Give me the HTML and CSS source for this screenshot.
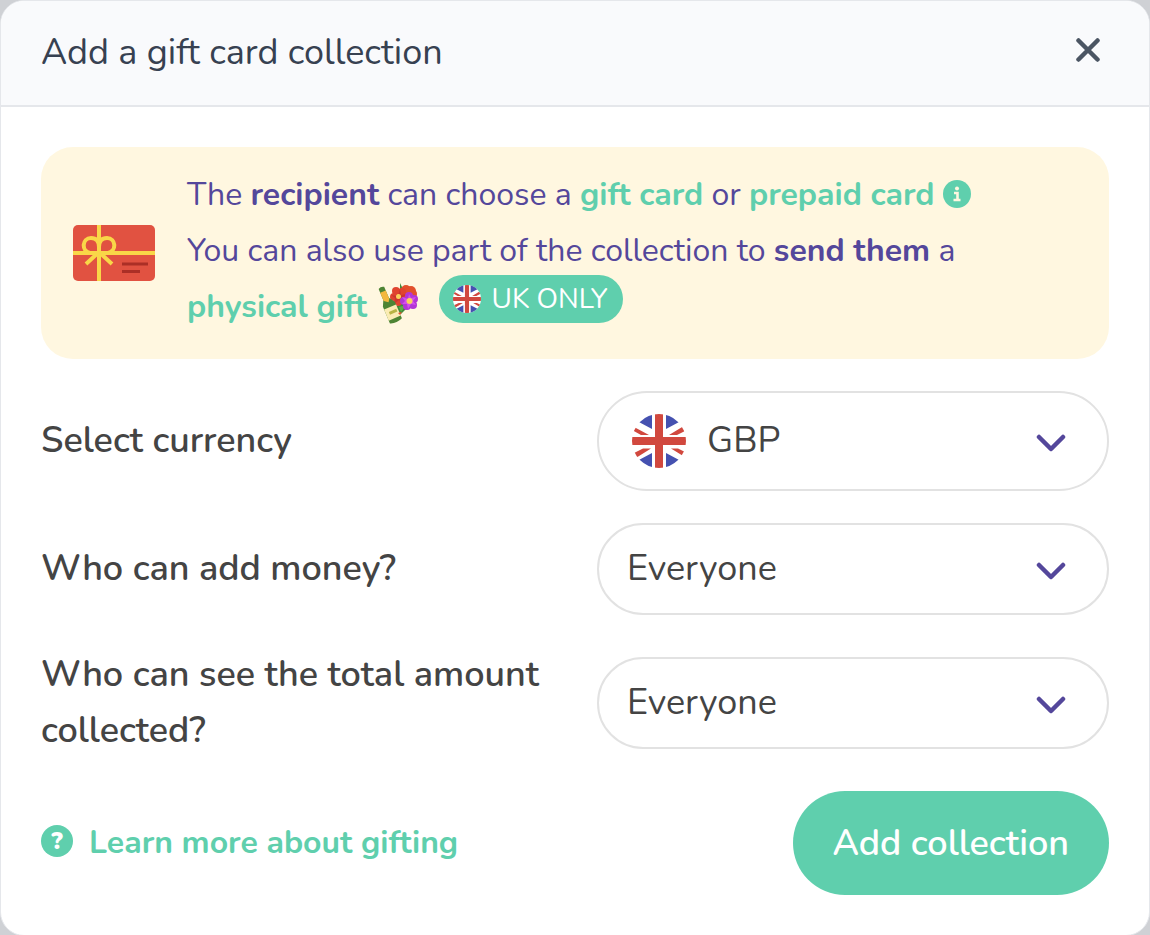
FILE: index.html
```html
<!DOCTYPE html>
<html lang="en">
<head>
    <meta charset="UTF-8">
    <meta name="viewport" content="width=device-width, initial-scale=1.0">
    <title>Add a gift card collection</title>
    <link rel="stylesheet" href="styles.css">
</head>
<body>
    <svg width="0" height="0" class="defs" aria-hidden="true">
        <clipPath id="flagClip"><circle cx="27" cy="27" r="27"/></clipPath>
        <symbol id="flag" viewBox="0 0 54 54">
            <g clip-path="url(#flagClip)">
                <path fill="#fff" d="M0 0h54v54H0z"/>
                <path fill="#4551b0" d="M20 0v15L5 7 12 0zM34 0v15L49 7 42 0zM20 54V39L5 47l7 7zM34 54V39L49 47l-7 7z"/>
                <path fill="#d1483e" d="M3 13.500l14 7.500H9L0 16zM51 12.500L37 21h8l9-4.500zM3 44.500L19 34.500H11L0 40zM52 42.500L39 34.500h7l8 4z"/>
                <path fill="#d1483e" d="M23 0h8v23h23v8H31v23h-8V31H0v-8h23z"/>
            </g>
        </symbol>
        <symbol id="chevron" viewBox="0 0 30 18">
            <path fill="none" stroke="#54479b" stroke-width="4.500" stroke-linecap="round" stroke-linejoin="round" d="M3 3l12 12L27 3"/>
        </symbol>
    </svg>

    <div class="modal" role="dialog" aria-labelledby="title">
        <div class="header">
            <h1 id="title">Add a gift card collection</h1>
            <button type="button" class="close" aria-label="Close">
                <svg width="24" height="24" viewBox="0 0 24 24"><path fill="none" stroke="#4b5563" stroke-width="4.500" stroke-linecap="round" d="M2.500 2.500l19 19M21.500 2.500l-19 19"/></svg>
            </button>
        </div>

        <form class="content">
            <div class="notice">
                <svg class="gift-card" width="82" height="56" viewBox="0 0 82 56">
                    <rect width="82" height="56" rx="5" fill="#e15241"/>
                    <path stroke="#f9d748" stroke-width="4" fill="none" d="M26 0v56M0 28h82"/>
                    <path stroke="#f9d748" stroke-width="4" fill="none" d="M26 28H17C8 26 9 13 18 13q8 0 8 9v6h9C44 26 43 13 34 13q-8 0-8 9M26 27L13 39M26 27l13 12"/>
                    <path stroke="#ab2f26" stroke-width="3" d="M49 39h26M49 46.500h18"/>
                </svg>
                <div class="notice-text">
                    <p>The <b>recipient</b> can choose a <a href="#">gift card</a> or <a href="#">prepaid card</a>
                        <svg class="info" width="28" height="28" viewBox="0 0 28 28"><circle cx="14" cy="14" r="14" fill="#5fcfad"/><circle cx="14" cy="8.500" r="2" fill="#fff7e0"/><path fill="none" stroke="#fff7e0" stroke-width="2.600" d="M11 13h3.500v7M10.500 20h7"/></svg>
                    </p>
                    <p>You can also use part of the collection to <b>send them</b> a <a href="#">physical gift</a>
                        <svg class="bottle" width="42" height="42" viewBox="0 0 42 42">
                            <path fill="#3f8a3c" d="M23 0l3 6 4 3-7 3zM19 24l6-6 9 4-6 5-4 4-5-1z"/>
                            <path fill="#5fae45" d="M22 24l7-2-5 7z"/>
                            <g fill="#e2502c"><circle cx="29" cy="7" r="5"/><circle cx="34" cy="8" r="5"/><circle cx="36" cy="11" r="4"/></g>
                            <g fill="#e0442f"><circle cx="19" cy="8" r="4"/><circle cx="25" cy="9" r="4"/><circle cx="26" cy="15" r="4"/><circle cx="21" cy="19" r="4"/><circle cx="17" cy="14" r="4"/></g>
                            <path fill="#c9372f" d="M21 13l2-7 1 6 6-1-5 4 2 6-5-4-5 4 1-6-4-3 6 1z"/>
                            <circle cx="21.500" cy="13.500" r="2.500" fill="#fbd25a"/>
                            <g fill="#b236d6"><circle cx="32" cy="13" r="4"/><circle cx="37" cy="16" r="4"/><circle cx="36" cy="22" r="4"/><circle cx="30" cy="23" r="4"/><circle cx="27" cy="18" r="4"/></g>
                            <path fill="#d34fec" d="M31 16l1-5 2 4 5-1-3 4 3 4-5-1-3 5-1-5-5 0 3-3-3-4z"/>
                            <circle cx="32.500" cy="18" r="3" fill="#fbd25a"/>
                            <g transform="translate(4 4) rotate(-23)">
                                <path fill="#4d8434" d="M-3 1q3-2 6 0v12l4 6v18q-7 3-13 0V19l3-6z"/>
                                <path fill="#f3b83f" d="M-3 5h6v9l-2 3-4-3z"/>
                                <path fill="#fbecb4" d="M-6 22h13v12h-13z"/>
                                <path fill="#b8b445" d="M-2.500 26h8v3h-8z"/>
                            </g>
                            <path fill="#e9522f" d="M21 30l4-1-2 3z"/>
                        </svg>
                        <span class="badge"><svg width="28" height="28"><use href="#flag"/></svg>UK ONLY</span>
                    </p>
                </div>
            </div>

            <div class="row">
                <label for="currency">Select currency</label>
                <div class="select select-currency">
                    <svg class="flag" width="54" height="54"><use href="#flag"/></svg>
                    <select id="currency"><option>GBP</option></select>
                    <svg class="chevron" width="30" height="18"><use href="#chevron"/></svg>
                </div>
            </div>

            <div class="row">
                <label for="contributors">Who can add money?</label>
                <div class="select">
                    <select id="contributors"><option>Everyone</option></select>
                    <svg class="chevron" width="30" height="18"><use href="#chevron"/></svg>
                </div>
            </div>

            <div class="row">
                <label for="viewers">Who can see the total amount collected?</label>
                <div class="select">
                    <select id="viewers"><option>Everyone</option></select>
                    <svg class="chevron" width="30" height="18"><use href="#chevron"/></svg>
                </div>
            </div>

            <div class="footer">
                <a href="#" class="learn-more"><span class="help">?</span>Learn more about gifting</a>
                <button type="button" class="add">Add collection</button>
            </div>
        </form>
    </div>
</body>
</html>
```
FILE: styles.css
```css
* {
    box-sizing: border-box;
}

body {
    margin: 0;
    background: #cfd1d5;
    font-family: Nunito, Lato, sans-serif;
    font-size: 36px;
    line-height: 56px;
    color: #444;
}

.defs {
    position: absolute;
}

.modal {
    background: #fff;
    border: 1px solid #e5e7eb;
    border-radius: 24px;
    overflow: hidden;
}

.header {
    display: flex;
    justify-content: space-between;
    align-items: center;
    padding: 24px 40px;
    background: #f9fafc;
    border-bottom: 2px solid #e5e7eb;
}

.header h1 {
    margin: 0;
    font-size: 36px;
    font-weight: 400;
    color: #374151;
}

button {
    border: none;
    font-family: inherit;
    cursor: pointer;
}

.close {
    display: flex;
    padding: 6px 9px 12px;
    background: none;
}

.content {
    display: flex;
    flex-direction: column;
    gap: 32px;
    padding: 40px;
}

.notice {
    display: flex;
    align-items: center;
    gap: 32px;
    padding: 20px 32px 24px;
    background: #fff7e0;
    border-radius: 32px;
    font-size: 32px;
    color: #54479b;
}

.gift-card {
    flex: none;
    margin-top: 4px;
}

.notice p {
    margin: 0;
}

a {
    color: #5fcfad;
    font-weight: 700;
    text-decoration: none;
}

.info {
    vertical-align: -3px;
}

.bottle {
    margin: 0 11px 0 2px;
    vertical-align: -8px;
}

.badge {
    display: inline-flex;
    align-items: center;
    gap: 11px;
    height: 48px;
    margin: -8px 0;
    padding: 0 16px 0 14px;
    border-radius: 24px;
    background: #5fcfad;
    color: #fff;
    font-size: 28px;
    vertical-align: 4px;
}

.row {
    display: grid;
    grid-template-columns: 1fr 1fr;
    align-items: center;
    gap: 44px;
}

.row label {
    font-weight: 600;
}

.select {
    position: relative;
}

.select select {
    display: block;
    width: 100%;
    height: 92px;
    padding: 0 80px 0 28px;
    appearance: none;
    background: #fff;
    border: 2px solid #e2e2e2;
    border-radius: 50px;
    font: inherit;
    color: inherit;
}

.select-currency select {
    height: 100px;
    padding-left: 108px;
}

.chevron,
.flag {
    position: absolute;
    top: 0;
    bottom: 0;
    margin: auto 0;
    pointer-events: none;
}

.chevron {
    top: 4px;
    right: 43px;
}

.flag {
    left: 35px;
}

.footer {
    display: flex;
    justify-content: space-between;
    align-items: center;
}

.learn-more {
    display: flex;
    align-items: center;
    gap: 16px;
    font-size: 32px;
}

.help {
    width: 32px;
    height: 32px;
    margin-bottom: 4px;
    border-radius: 50%;
    background: #5fcfad;
    color: #fff;
    font-size: 24px;
    font-weight: 900;
    line-height: 32px;
    text-align: center;
}

.add {
    height: 104px;
    padding: 0 40px;
    border-radius: 52px;
    background: #5fcfad;
    color: #fff;
    font-size: 36px;
    font-weight: 600;
}
```
